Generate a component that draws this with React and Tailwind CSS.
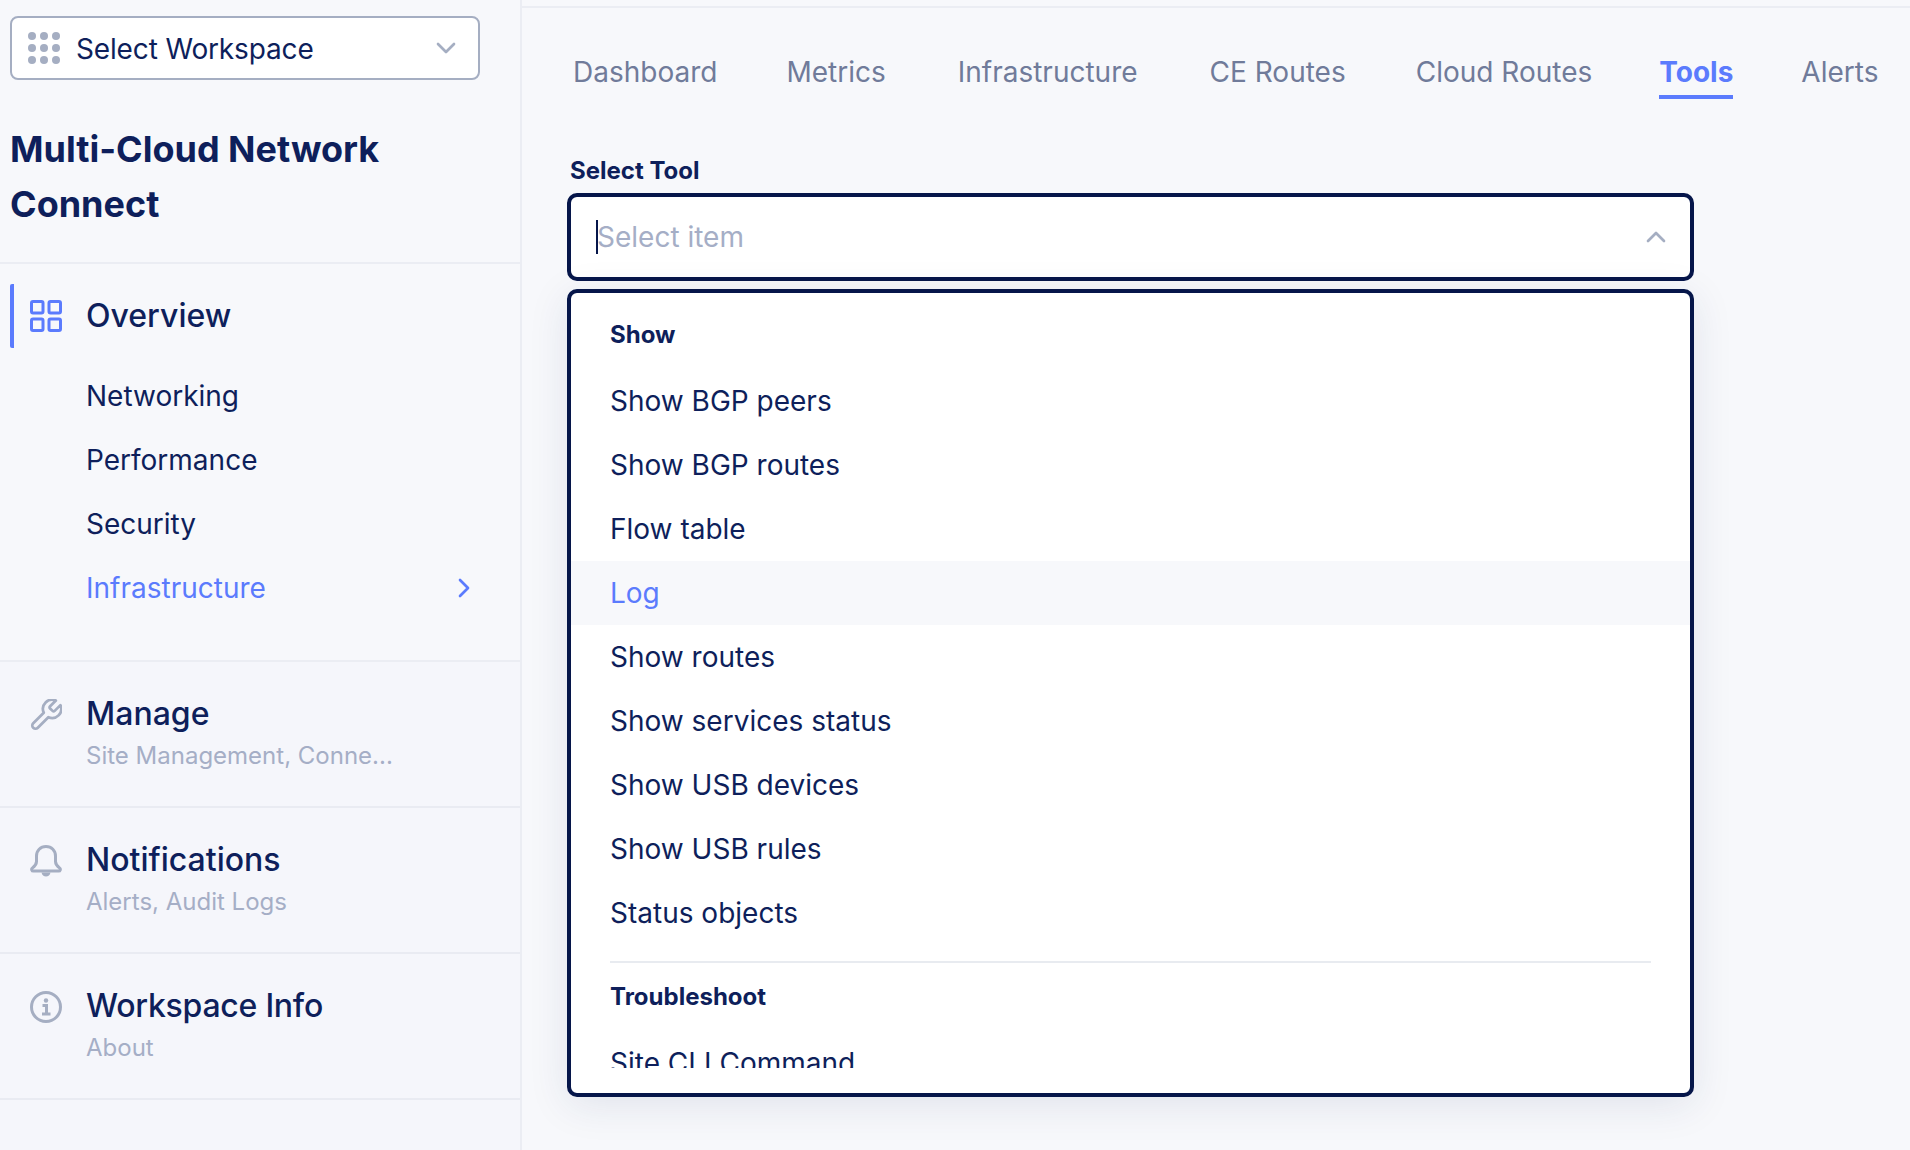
import React from 'react';
import { ChevronDown, ChevronUp, ChevronRight } from 'lucide-react';

const tabs = [
    { name: 'Dashboard', gap: '' },
    { name: 'Metrics', gap: 'ml-[69px]' },
    { name: 'Infrastructure', gap: 'ml-[72px]' },
    { name: 'CE Routes', gap: 'ml-[72px]' },
    { name: 'Cloud Routes', gap: 'ml-[70px]' },
    { name: 'Tools', gap: 'ml-[67px]' },
    { name: 'Alerts', gap: 'ml-[68px]' },
];
const subItems = ['Networking', 'Performance', 'Security'];
const showItems = ['Show BGP peers', 'Show BGP routes', 'Flow table', 'Log', 'Show routes', 'Show services status', 'Show USB devices', 'Show USB rules', 'Status objects'];

const DotsIcon = () => (
    <svg width="32" height="32" viewBox="0 0 32 32" fill="#a5aec2" className="shrink-0">
        {[4, 16, 28].map(y => [4, 16, 28].map(x => <circle key={`${x}-${y}`} cx={x} cy={y} r="4" />))}
    </svg>
);

const GridIcon = () => (
    <svg width="32" height="32" viewBox="0 0 32 32" fill="none" stroke="#5b7bfd" strokeWidth="3" className="shrink-0">
        <rect x="1.5" y="1.5" width="11.5" height="11.5" rx="1.5" />
        <rect x="19" y="1.5" width="11.5" height="11.5" rx="1.5" />
        <rect x="1.5" y="19" width="11.5" height="11.5" rx="1.5" />
        <rect x="19" y="19" width="11.5" height="11.5" rx="1.5" />
    </svg>
);

const WrenchIcon = () => (
    <svg width="32" height="32" viewBox="1.500 1.500 21 21" fill="none" stroke="#a5aec2" strokeWidth="1.800" strokeLinejoin="round" className="shrink-0">
        <path d="M14.7 6.3a1 1 0 0 0 0 1.4l1.6 1.6a1 1 0 0 0 1.4 0l3.77-3.77a6 6 0 0 1-7.94 7.94l-6.91 6.91a2.12 2.12 0 0 1-3-3l6.91-6.91a6 6 0 0 1 7.94-7.94l-3.76 3.76z" />
    </svg>
);

const BellIcon = () => (
    <svg width="32" height="32" viewBox="0 0 32 32" fill="none" stroke="#a5aec2" strokeWidth="3" strokeLinejoin="round" className="shrink-0">
        <path d="M16 1.500c-5.600 0-9.500 4-9.500 9.500v5.500c0 2.600-1.600 4.600-4.200 6.600-1.200 1-.6 3 1 3h25.400c1.600 0 2.200-2 1-3-2.600-2-4.200-4-4.200-6.600V11c0-5.500-3.900-9.500-9.500-9.500z" />
        <path d="M11.500 27.500h9c-.4 2.400-2.300 4-4.500 4s-4.100-1.600-4.500-4z" fill="#a5aec2" stroke="none" />
    </svg>
);

const InfoIcon = () => (
    <svg width="32" height="32" viewBox="0 0 32 32" fill="none" stroke="#a5aec2" strokeWidth="3" className="shrink-0">
        <circle cx="16" cy="16" r="14.500" />
        <circle cx="16" cy="9.500" r="2.200" fill="#a5aec2" stroke="none" />
        <path d="M12.500 14.500H16.500V23M12 23H20.500" />
    </svg>
);

const SideSection = ({ icon, title, sub, titleClass = '' }) => (
    <div className="flex h-[146px] gap-[24px] border-b-2 border-[#e9ebf2] pl-[30px] pt-[33px]">
        <div className="mt-[4px] shrink-0">{icon}</div>
        <div className="-mt-[1px]">
            <div className={`${titleClass} text-[32px] leading-[40px] font-medium text-[#0e1f5b]`}>{title}</div>
            <div className="mt-[6px] text-[24px] leading-[32px] text-[#a5aec6]">{sub}</div>
        </div>
    </div>
);

const App = () => {
    return (
        <div className="flex h-[1150px] w-full overflow-hidden bg-[#f7f8fb] font-['Inter',sans-serif]">
            <aside className="flex w-[522px] shrink-0 flex-col border-r-2 border-[#ebedf3]">
                <div className="ml-[10px] mt-[16px] flex h-[64px] w-[470px] items-center rounded-[8px] border-2 border-[#a5aec2] bg-white pl-[16px] pr-[16px]">
                    <DotsIcon />
                    <span className="ml-[16px] flex-1 pt-[2px] text-[28px] tracking-[-0.15px] text-[#0e1f5b]">Select Workspace</span>
                    <ChevronDown size={32} color="#a5aec2" strokeWidth={2} />
                </div>

                <div className="border-b-2 border-[#ebedf3] pb-[30px] pl-[10px] pt-[42px] text-[36px] font-bold leading-[55px] text-[#0e1f5b]">
                    Multi-Cloud Network<br />Connect
                </div>

                <div className="border-b-2 border-[#ebedf3] pb-[40px] pt-[20px]">
                    <div className="flex h-[64px] items-center">
                        <div className="ml-[10px] h-full w-[4px] rounded-l-[2px] bg-[#5b7bfd]" />
                        <div className="ml-[16px]"><GridIcon /></div>
                        <span className="ml-[24px] text-[32px] font-medium text-[#0e1f5b]">Overview</span>
                    </div>
                    <div className="mt-[16px] pl-[86px]">
                        {subItems.map(item => (
                            <div key={item} className="flex h-[64px] items-center text-[28px] text-[#0e1f5b]">{item}</div>
                        ))}
                        <div className="flex h-[64px] items-center justify-between pr-[40px] text-[28px] text-[#5b7bfd]">
                            Infrastructure
                            <ChevronRight size={32} color="#5b7bfd" strokeWidth={2} />
                        </div>
                    </div>
                </div>

                <div className="flex-1 bg-[#f5f6fb]">
                    <SideSection icon={<WrenchIcon />} title="Manage" sub="Site Management, Conne..." />
                    <SideSection icon={<BellIcon />} title="Notifications" sub="Alerts, Audit Logs" />
                    <SideSection icon={<InfoIcon />} title="Workspace Info" sub="About" titleClass="tracking-[-0.25px]" />
                </div>
            </aside>

            <main className="mt-[6px] min-w-0 flex-1 border-t-2 border-[#ebedf3]">
                <nav className="flex pl-[51px] pt-[44px]">
                    {tabs.map(tab => (
                        tab.name === 'Tools' ? (
                            <div key={tab.name} className={`${tab.gap} border-b-4 border-[#5b7bfd] pb-[3px] text-[28px] font-bold leading-[40px] text-[#5b7bfd]`}>{tab.name}</div>
                        ) : (
                            <div key={tab.name} className={`${tab.gap} pb-[7px] text-[28px] leading-[40px] text-[#707b9a]`}>{tab.name}</div>
                        )
                    ))}
                </nav>

                <div className="ml-[45px] w-[1127px] pt-[56px]">
                    <label className="mb-[6px] ml-[3px] block text-[24px] font-bold leading-[32px] text-[#0e1f5b]">Select Tool</label>
                    <div className="flex h-[88px] items-center justify-between rounded-[10px] border-4 border-[#06164a] bg-white pl-[26px] pr-[18px]">
                        <div className="relative text-[28px] leading-[34px] text-[#a5aec6]">
                            <span className="absolute -left-[1px] top-0 h-[34px] w-[2px] bg-[#06164a]" />
                            Select item
                        </div>
                        <ChevronUp size={32} color="#a5aec2" strokeWidth={2} />
                    </div>

                    <div className="mt-[8px] h-[808px] rounded-[10px] border-4 border-[#06164a] bg-white shadow-[0_8px_40px_rgba(30,45,100,0.1)]">
                        <div className="h-[775px] overflow-hidden pt-[26px]">
                            <div className="pl-[39px] text-[24px] font-bold leading-[32px] text-[#0e1f5b]">Show</div>
                            <div className="mt-[18px]">
                                {showItems.map(item => (
                                    <div
                                        key={item}
                                        className={item === 'Log'
                                            ? 'flex h-[64px] items-center bg-[#f7f8fb] pl-[39px] text-[28px] text-[#5b7bfd]'
                                            : 'flex h-[64px] items-center pl-[39px] text-[28px] text-[#0e1f5b]'}
                                    >
                                        {item}
                                    </div>
                                ))}
                            </div>
                            <div className="mx-[39px] mt-[16px] h-[2px] bg-[#e8ebf0]" />
                            <div className="mt-[18px] pl-[39px] text-[24px] font-bold leading-[32px] text-[#0e1f5b]">Troubleshoot</div>
                            <div className="mt-[18px] flex h-[64px] items-center pl-[39px] text-[28px] text-[#0e1f5b]">Site CLI Command</div>
                        </div>
                    </div>
                </div>
            </main>
        </div>
    );
}

export default App
